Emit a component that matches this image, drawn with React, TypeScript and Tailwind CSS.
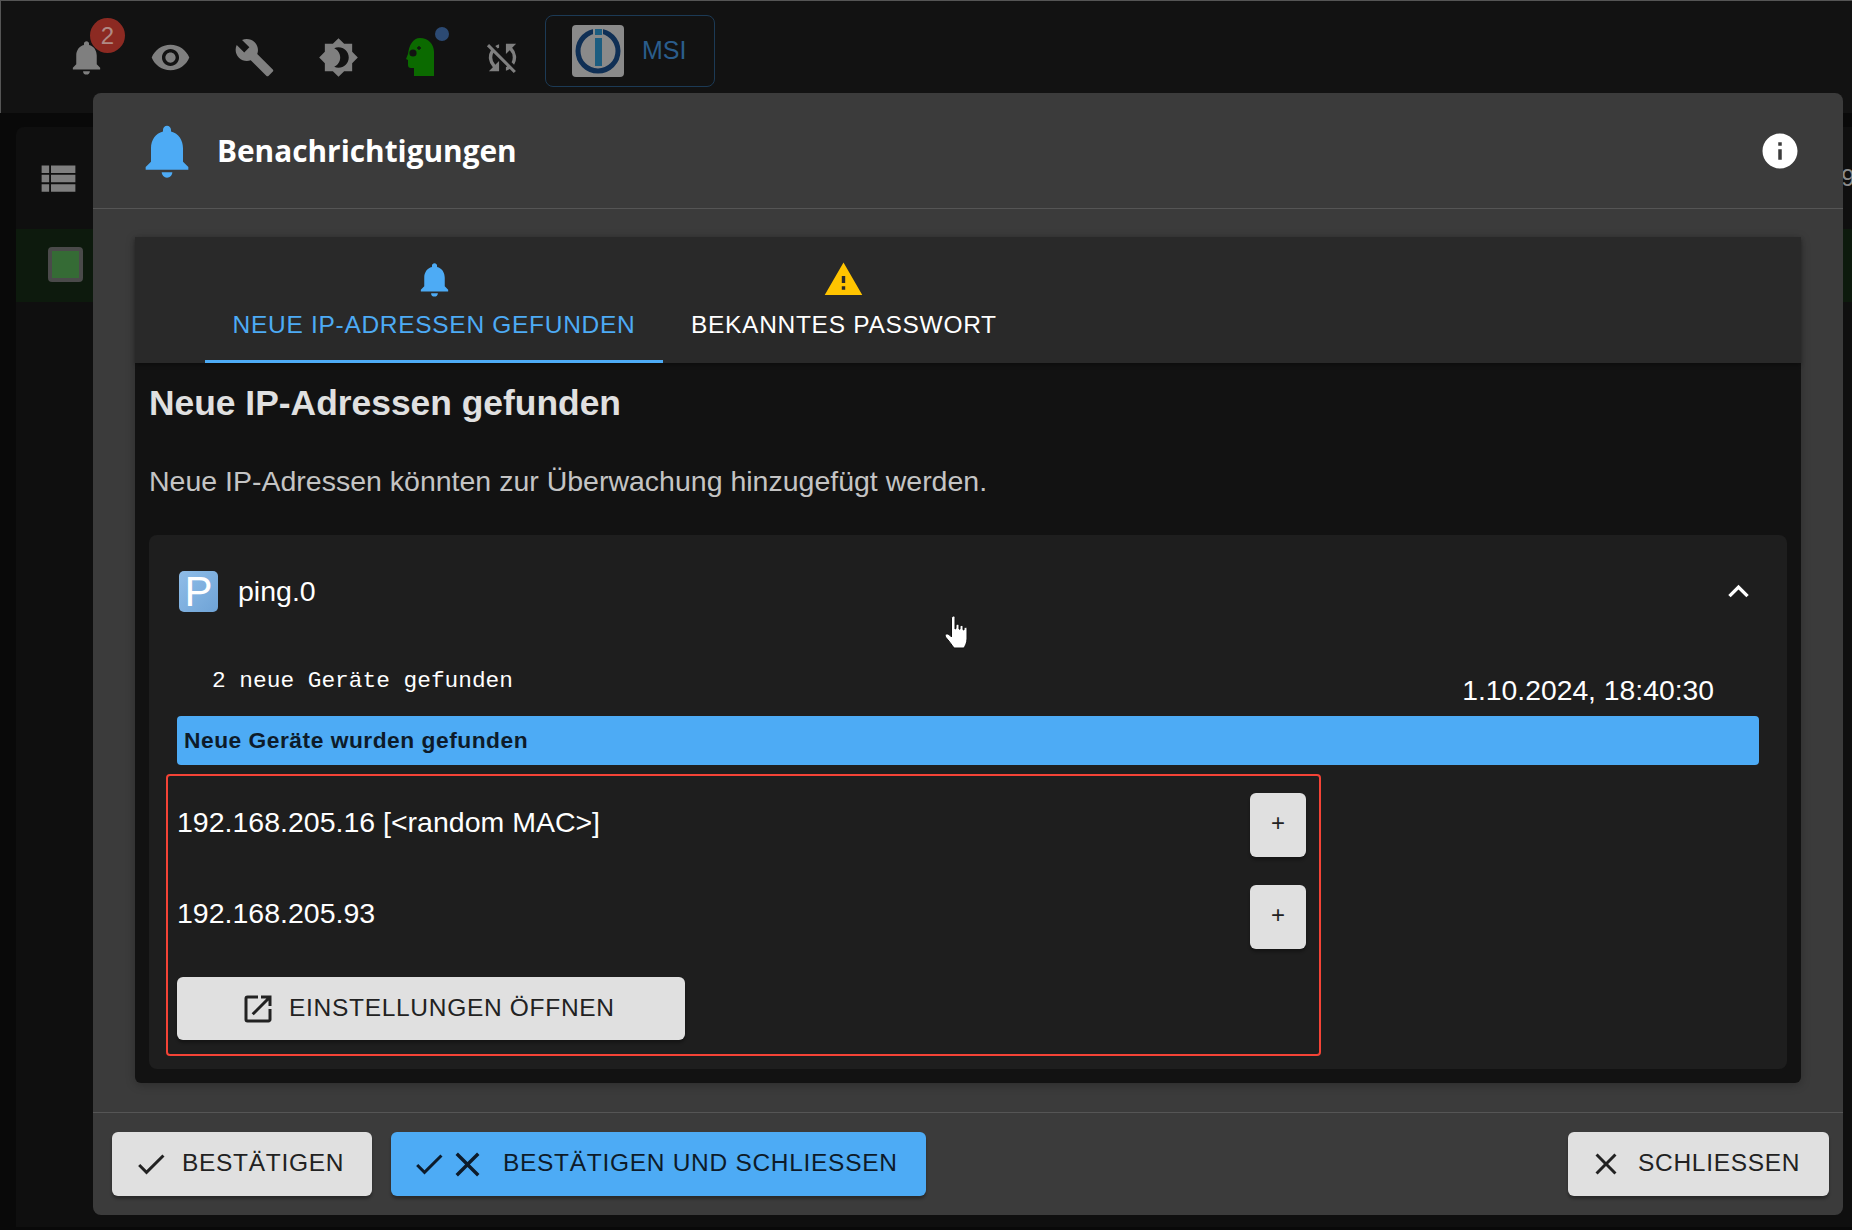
import { MdNotifications, MdVisibility, MdBuild, MdBrightness4, MdSyncDisabled, MdViewList, MdInfo, MdWarning, MdExpandLess, MdOpenInNew, MdCheck, MdClose } from "react-icons/md"

function HeadIcon() {
  return (
    <svg width="28" height="38" viewBox="0 0 28 38">
      <path fill="#0b6a00" d="M14 0c8 0 14 6 14 14v24H8v-8H5c-2 0-3-1-3-3v-5l-2-1 2-5C3 7 7 0 14 0z" />
      <circle cx="7" cy="15" r="3.6" fill="#121212" />
      <path stroke="#121212" strokeWidth="1.3" d="M13 8v4M11 10h4" />
    </svg>
  )
}

function LogoIcon() {
  return (
    <svg width="52" height="52" viewBox="0 0 52 52" className="rounded-[4px]">
      <rect width="52" height="52" fill="#8a8a8a" />
      <circle cx="26" cy="26" r="20" fill="none" stroke="#0f2f55" strokeWidth="5" />
      <rect x="21" y="2" width="10" height="40" fill="#8a8a8a" />
      <rect x="23" y="4" width="7" height="6" fill="#1c5d80" />
      <rect x="23" y="13" width="7" height="28" fill="#1c5d80" />
    </svg>
  )
}

function HandCursor() {
  return (
    <svg width="26" height="34" viewBox="0 0 26 34" className="absolute left-[944px] top-[615px]">
      <path fill="#fff" stroke="#111" strokeWidth="1" d="M8.500 1.500c1-1 2.500-.5 2.500 1V14l1-.5V10c1-1 2.500-1 3 0v4l1 .2v-3c1-1 2.400-1 3 0v3.500l1 .3V13c1-1 2.500-.8 3 .5V24c0 4-2 7-3 9H10c-2-3-5-7-8.500-11-1-1.500 0-3.500 2-3 2 .5 3 2 4 3V3c0-.5.500-1 1-1.500z" />
    </svg>
  )
}

const grayBtn = "bg-[#e0e0e0] text-[#222222] rounded-[6px] shadow-[0_3px_3px_rgba(0,0,0,0.3)]"

function TopBar() {
  const iconCls = "text-[41px] text-[#7f7f7f]"
  return (
    <div className="h-[113px] bg-[#121212] border-t border-l border-[#555555] flex items-start pl-[43px]">
      <div className="relative w-[84px] h-[84px] mt-[14px] flex items-center justify-center">
        <MdNotifications className={iconCls} />
        <span className="absolute left-[46px] top-[3px] w-[35px] h-[35px] rounded-full bg-[#8c2a22] text-[#b08a85] text-[24px] flex items-center justify-center">2</span>
      </div>
      <div className="w-[84px] h-[84px] mt-[14px] flex items-center justify-center"><MdVisibility className={iconCls} /></div>
      <div className="w-[84px] h-[84px] mt-[14px] flex items-center justify-center"><MdBuild className={iconCls} /></div>
      <div className="w-[84px] h-[84px] mt-[14px] flex items-center justify-center"><MdBrightness4 className={iconCls} /></div>
      <div className="relative w-[80px] h-[84px] mt-[14px] flex items-center justify-center">
        <HeadIcon />
        <span className="absolute left-[55px] top-[12px] w-[14px] h-[14px] rounded-full bg-[#2c4a73]" />
      </div>
      <div className="w-[84px] h-[84px] mt-[14px] flex items-center justify-center"><MdSyncDisabled className={iconCls} /></div>
      <div className="ml-[1px] mt-[14px] w-[170px] h-[72px] border border-[#1c3a55] rounded-[8px] flex items-center pl-[26px] gap-[18px]">
        <LogoIcon />
        <span className="text-[#2a5d8c] text-[25px]">MSI</span>
      </div>
    </div>
  )
}

function Background() {
  return (
    <div className="pl-[16px] pt-[14px]">
      <div className="bg-[#0f0f0f] rounded-tl-[8px] h-[1100px]">
        <div className="h-[102px] flex items-center pl-[20px] overflow-hidden">
          <MdViewList className="shrink-0 text-[45px] text-[#7f7f7f]" />
          <span className="ml-[1747px] shrink-0 text-[#8a8a8a] text-[24px] whitespace-nowrap">09</span>
        </div>
        <div className="h-[73px] bg-[#0d1a0d] flex items-center pl-[32px] pb-[3px]">
          <div className="w-[35px] h-[35px] border-[4px] border-[#4a4a4a] rounded-[4px] bg-[#356b35]" />
        </div>
      </div>
    </div>
  )
}

function Tabs() {
  return (
    <div className="h-[126px] bg-[#292929] flex pl-[70px] shadow-[0_2px_4px_rgba(0,0,0,0.3)]">
      <div className="w-[458px] h-full border-b-[3px] border-[#4dabf5] flex flex-col items-center pt-[22px] text-[#4dabf5]">
        <MdNotifications className="text-[41px]" />
        <span className="text-[24.500px] leading-[28px] tracking-[0.7px] mt-[11px]">NEUE IP-ADRESSEN GEFUNDEN</span>
      </div>
      <div className="h-full px-[28px] flex flex-col items-center pt-[22px] text-white">
        <MdWarning className="text-[41px] text-[#ffc400]" />
        <span className="text-[24.500px] leading-[28px] tracking-[0.7px] mt-[11px]">BEKANNTES PASSWORT</span>
      </div>
    </div>
  )
}

function DeviceRow({ label, labelCls }: { label: string; labelCls: string }) {
  return (
    <div className="flex justify-between items-start">
      <span className={`text-white text-[28.500px] leading-[32px] ${labelCls}`}>{label}</span>
      <button className={`${grayBtn} w-[56px] h-[64px] text-[24px] leading-[60px] pb-[4px]`}>+</button>
    </div>
  )
}

function AdapterCard() {
  return (
    <div className="bg-[#1e1e1e] rounded-[8px] h-[534px] px-[28px] pt-[36px]">
      <div className="flex items-center h-[41px] pl-[2px]">
        <div className="w-[39px] h-[41px] rounded-[5px] bg-gradient-to-br from-[#8fbde8] to-[#6fa3d6] text-white text-[42px] leading-[41px] text-center">P</div>
        <span className="ml-[20px] mb-[1px] text-white text-[28.500px]">ping.0</span>
        <MdExpandLess className="ml-auto text-[41px] text-white" />
      </div>
      <div className="flex justify-between items-end h-[104px]">
        <span className="pl-[35px] mb-[18px] text-white text-[22.800px] font-['Liberation_Mono',monospace]">2 neue Geräte gefunden</span>
        <span className="pr-[45px] mb-[5px] text-white text-[28.300px]">1.10.2024, 18:40:30</span>
      </div>
      <div className="h-[49px] bg-[#4dabf5] rounded-[4px] pl-[7px] flex items-center text-[#0d1b2a] font-bold text-[22.800px] tracking-[0.5px]">Neue Geräte wurden gefunden</div>
      <div className="ml-[-11px] mt-[9px] w-[1155px] h-[282px] border-2 border-[#f44336] rounded-[4px] pl-[9px] pr-[13px] pt-[17px] flex flex-col gap-[28px]">
        <DeviceRow label="192.168.205.16 [<random MAC>]" labelCls="mt-[13px]" />
        <DeviceRow label="192.168.205.93" labelCls="mt-[12px]" />
        <button className={`${grayBtn} w-[508px] h-[63px] flex items-center pl-[63px] gap-[13px] text-[24.500px] tracking-[0.7px]`}>
          <MdOpenInNew className="text-[36px]" />
          EINSTELLUNGEN ÖFFNEN
        </button>
      </div>
    </div>
  )
}

function Modal() {
  return (
    <div className="absolute left-[93px] top-[93px] w-[1750px] h-[1122px] bg-[#3b3b3b] rounded-[8px] flex flex-col">
      <div className="h-[116px] border-b border-[#555555] flex items-center pl-[42px] pr-[42px]">
        <MdNotifications className="text-[64px] text-[#4dabf5]" />
        <span className="ml-[18px] mt-[2px] text-white text-[29.800px] font-bold font-['Open_Sans',sans-serif]">Benachrichtigungen</span>
        <MdInfo className="ml-auto text-[42px] text-white" />
      </div>
      <div className="px-[42px] pt-[28px]">
        <div className="h-[846px] bg-[#121212] rounded-b-[6px] shadow-[0_2px_10px_rgba(0,0,0,0.25)]">
          <Tabs />
          <div className="px-[14px]">
            <h2 className="text-[#e0e0e0] font-bold text-[35.400px] leading-[40px] mt-[20px]">Neue IP-Adressen gefunden</h2>
            <p className="text-[#c4c4c4] text-[28.500px] leading-[32px] mt-[42px]">Neue IP-Adressen könnten zur Überwachung hinzugefügt werden.</p>
            <div className="mt-[38px]"><AdapterCard /></div>
          </div>
        </div>
      </div>
      <div className="mt-[29px] border-t border-[#555555] flex pt-[19px] pl-[19px] pr-[14px] text-[24.500px] tracking-[0.7px]">
        <button className={`${grayBtn} h-[64px] w-[260px] flex items-center pl-[21px] gap-[14px]`}>
          <MdCheck className="text-[36px]" /><span className="mb-[2px] -ml-[1px]">BESTÄTIGEN</span>
        </button>
        <button className="ml-[19px] h-[64px] w-[535px] bg-[#4dabf5] text-[#0d1b2a] rounded-[6px] shadow-[0_3px_3px_rgba(0,0,0,0.3)] flex items-center pl-[20px]">
          <MdCheck className="text-[36px]" /><MdClose className="text-[41px]" /><span className="ml-[15px] mb-[2px]">BESTÄTIGEN UND SCHLIESSEN</span>
        </button>
        <button className={`${grayBtn} ml-auto h-[64px] w-[261px] flex items-center pl-[20px] gap-[14px]`}>
          <MdClose className="text-[36px]" /><span className="mb-[2px]">SCHLIESSEN</span>
        </button>
      </div>
    </div>
  )
}

export default function App() {
  return (
    <div className="relative h-[1230px] overflow-hidden bg-[#090909] font-['Liberation_Sans',Arial,sans-serif]">
      <TopBar />
      <Background />
      <Modal />
      <HandCursor />
    </div>
  )
}
